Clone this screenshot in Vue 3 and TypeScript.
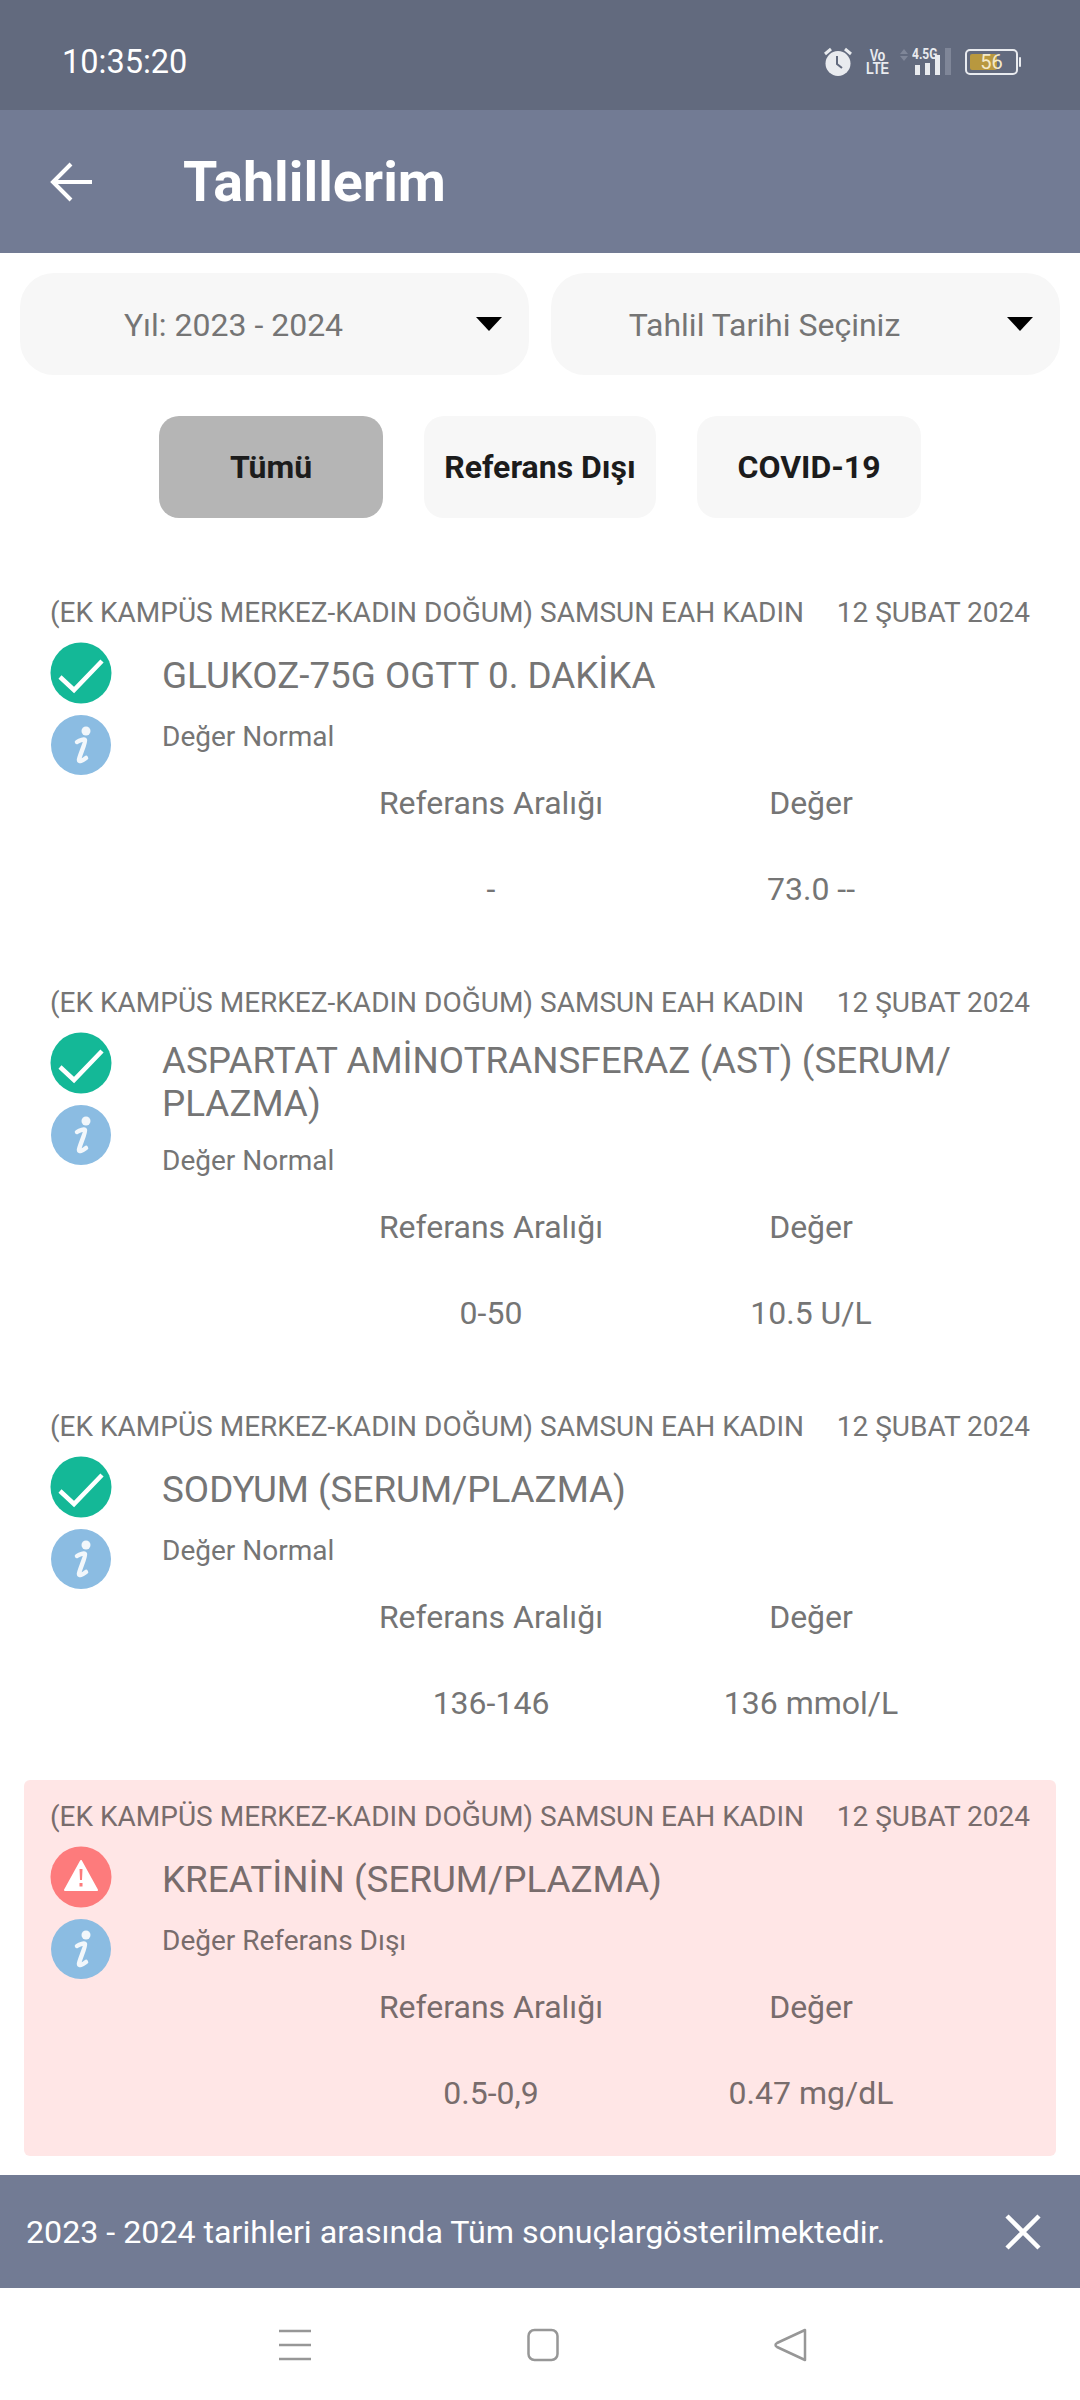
<script setup lang="ts">
interface Row {
  title: string[];
  status: string;
  range: string;
  value: string;
  bad?: boolean;
}
const rows: Row[] = [
  { title: ['GLUKOZ-75G OGTT 0. DAKİKA'], status: 'Değer Normal', range: '-', value: '73.0 --' },
  { title: ['ASPARTAT AMİNOTRANSFERAZ (AST) (SERUM/', 'PLAZMA)'], status: 'Değer Normal', range: '0-50', value: '10.5 U/L' },
  { title: ['SODYUM (SERUM/PLAZMA)'], status: 'Değer Normal', range: '136-146', value: '136 mmol/L' },
  { title: ['KREATİNİN (SERUM/PLAZMA)'], status: 'Değer Referans Dışı', range: '0.5-0,9', value: '0.47 mg/dL', bad: true },
];
const filters = ['Tümü', 'Referans Dışı', 'COVID-19'];
</script>

<template>
  <div class="screen">
    <div class="status">
      <span class="clock">10:35:20</span>
      <div class="sys">
        <svg width="30" height="30" viewBox="0 0 30 30">
          <circle cx="15" cy="16.500" r="12.500" fill="#e9ebef" />
          <path d="M14 9v8l5 4" stroke="#626a7e" stroke-width="2" fill="none" />
          <path d="M2 7l6-5M28 7l-6-5" stroke="#e9ebef" stroke-width="3" />
        </svg>
        <div class="volte"><span>Vo</span><span>LTE</span></div>
        <div class="signal">
          <span class="g">4.5G</span>
          <svg width="52" height="27" viewBox="0 0 52 27">
            <path d="M0 6l4-5 4 5zM0 8l4 5 4-5z" fill="#7f8698" />
            <rect x="15" y="17" width="5" height="10" fill="#e9ebef" />
            <rect x="25" y="15" width="5" height="12" fill="#e9ebef" />
            <rect x="35" y="7" width="5" height="20" fill="#e9ebef" />
            <rect x="45" y="0" width="6" height="27" fill="#7f8698" />
          </svg>
        </div>
        <div class="battery">
          <div class="cell"><i class="fill"></i><span>56</span></div>
          <b class="nub"></b>
        </div>
      </div>
    </div>

    <header class="bar">
      <svg class="back" width="44" height="44" viewBox="0 0 44 44">
        <path d="M42 22H3M21 4L3 22l18 18" stroke="#fff" stroke-width="4" fill="none" />
      </svg>
      <h1>Tahlillerim</h1>
    </header>

    <div class="selects">
      <div class="select"><span>Yıl: 2023 - 2024</span><i class="caret"></i></div>
      <div class="select"><span>Tahlil Tarihi Seçiniz</span><i class="caret"></i></div>
    </div>

    <div class="filters">
      <button v-for="(f, i) in filters" :key="f" class="filter" :class="{ active: i === 0 }">{{ f }}</button>
    </div>

    <div class="list">
      <article v-for="r in rows" :key="r.title[0]" class="item" :class="{ bad: r.bad }">
        <div class="meta">
          <span>(EK KAMPÜS MERKEZ-KADIN DOĞUM) SAMSUN EAH KADIN</span>
          <span>12 ŞUBAT 2024</span>
        </div>
        <div class="main">
          <div class="icons">
            <svg v-if="!r.bad" width="62" height="62" viewBox="0 0 62 62">
              <circle cx="31" cy="31" r="30.500" fill="#14b897" />
              <path d="M10 35l14 13 28-29" stroke="#fff" stroke-width="4.500" fill="none" />
            </svg>
            <svg v-else width="62" height="62" viewBox="0 0 62 62">
              <circle cx="31" cy="31" r="30.500" fill="#fd7b7c" />
              <path d="M31 15L47 44H15z" fill="#fff" stroke="#fff" stroke-width="2" stroke-linejoin="round" />
              <path d="M29.500 23h3l-.5 11h-2zM29.500 37h3v3.500h-3z" fill="#fd7b7c" />
            </svg>
            <svg width="62" height="60" viewBox="0 0 62 60">
              <circle cx="31" cy="30" r="30" fill="#8bbce2" />
              <circle cx="36" cy="16" r="4.500" fill="#f2f7fb" />
              <path d="M27 27c3-2 7-3 8-2 1 2-6 17-6 20 0 2 3 1 7-2" stroke="#f2f7fb" stroke-width="4.500" fill="none" stroke-linecap="round" />
            </svg>
          </div>
          <div class="text">
            <h2 class="title"><span v-for="t in r.title" :key="t">{{ t }}</span></h2>
            <p class="state">{{ r.status }}</p>
            <div class="table">
              <span>Referans Aralığı</span><span>Değer</span>
              <span>{{ r.range }}</span><span>{{ r.value }}</span>
            </div>
          </div>
        </div>
      </article>
    </div>

    <div class="snack">
      <span>2023 - 2024 tarihleri arasında Tüm sonuçlargösterilmektedir.</span>
      <svg width="38" height="38" viewBox="0 0 38 38">
        <path d="M3 3l32 32M35 3L3 35" stroke="#fff" stroke-width="4.500" />
      </svg>
    </div>

    <nav class="nav">
      <svg width="34" height="34" viewBox="0 0 34 34">
        <path d="M1 3h32M1 17h32M1 31h32" stroke="#979797" stroke-width="2.500" />
      </svg>
      <svg width="34" height="34" viewBox="0 0 34 34">
        <rect x="2.500" y="2" width="29" height="30" rx="6" stroke="#979797" stroke-width="2.500" fill="none" />
      </svg>
      <svg width="34" height="34" viewBox="0 0 34 34">
        <path d="M31 2v30L3 19c-2-1-2-3 0-4z" stroke="#979797" stroke-width="2.500" fill="none" stroke-linejoin="round" />
      </svg>
    </nav>
  </div>
</template>

<style>
body { margin: 0; background: #fff; }
</style>

<style scoped>
.screen {
  width: 1080px;
  height: 2400px;
  background: #fff;
  font-family: Roboto, "Liberation Sans", sans-serif;
  overflow: hidden;
  display: flex;
  flex-direction: column;
}
.status {
  height: 110px;
  flex: none;
  background: #626a7e;
  display: flex;
  align-items: center;
  justify-content: space-between;
  padding: 13px 59px 0 62px;
  box-sizing: border-box;
  color: #fff;
}
.clock { font-size: 32.500px; line-height: 1; margin-top: 2px; }
.sys { display: flex; align-items: center; gap: 13px; height: 40px; }
.volte {
  width: 19px;
  margin-left: 2px;
  display: flex;
  flex-direction: column;
  align-items: center;
  color: #e9ebef;
  font-family: "Liberation Sans", sans-serif;
  font-weight: 700;
  font-size: 16px;
  line-height: 13px;
  transform: scaleX(0.8);
}
.signal { position: relative; display: flex; }
.g {
  position: absolute;
  left: 12px;
  top: -3px;
  font-size: 15px;
  font-weight: 700;
  color: #e9ebef;
  transform: scaleX(0.8);
  transform-origin: left;
}
.battery { display: flex; align-items: center; gap: 1px; }
.cell {
  position: relative;
  width: 49px;
  height: 22px;
  border: 2px solid #e9ebef;
  border-radius: 5px;
  display: flex;
  align-items: center;
  justify-content: center;
  color: #f4e9c8;
  font-size: 20px;
}
.fill { position: absolute; left: 3px; top: 3px; bottom: 3px; width: 27px; background: #b8983f; border-radius: 2px; }
.cell span { position: relative; }
.nub { width: 2px; height: 10px; background: #e9ebef; border-radius: 1px; }
.bar {
  height: 143px;
  flex: none;
  background: #727b94;
  display: flex;
  align-items: center;
  padding: 0 0 0 50px;
  box-sizing: border-box;
}
.back { flex: none; margin-right: 89px; }
.bar h1 {
  margin: 3px 0 0;
  font-size: 55.500px;
  font-weight: 700;
  color: #fff;
  line-height: 1;
}
.selects { display: flex; gap: 22px; padding: 20px 20px 0; }
.select {
  position: relative;
  width: 509px;
  flex: none;
  height: 102px;
  background: #f7f7f7;
  border-radius: 34px;
  display: flex;
  align-items: center;
  justify-content: center;
  padding-right: 82px;
  box-sizing: border-box;
  font-size: 32px;
  color: #757575;
}
.select span { position: relative; top: 1px; }
.caret {
  position: absolute;
  right: 27px;
  top: 44px;
  width: 0;
  height: 0;
  border-left: 13px solid transparent;
  border-right: 13px solid transparent;
  border-top: 14px solid #000;
}
.filters { display: flex; justify-content: center; gap: 41px; padding: 41px 0 0; }
.filter {
  width: 224px;
  height: 102px;
  border: 0;
  padding: 0;
  border-radius: 20px;
  background: #f7f7f7;
  font: 700 32px Roboto, sans-serif;
  color: #1c1c1c;
}
.filter:nth-child(2) { width: 232px; }
.filter.active { background: #b5b5b5; }
.list { flex: 1; padding: 58px 24px 0; display: flex; flex-direction: column; gap: 14.500px; }
.item { color: #757575; border-radius: 6px; padding-bottom: 20px; }
.item.bad { background: #ffe6e6; color: #786c6c; }
.meta {
  display: flex;
  justify-content: space-between;
  height: 69px;
  box-sizing: border-box;
  align-items: center;
  padding: 3px 26px 0;
  font-size: 28px;
  white-space: nowrap;
}
.main { display: flex; }
.icons { flex: none; width: 138px; padding-left: 26px; box-sizing: border-box; display: flex; flex-direction: column; gap: 11px; margin-top: -3px; }
.icons svg { display: block; }
.text { min-width: 0; flex: 1; }
.title {
  margin: 4px 0 0;
  font-weight: 400;
  font-size: 36.800px;
  line-height: 43px;
  min-height: 52px;
  display: flex;
  flex-direction: column;
  justify-content: center;
  white-space: nowrap;
}
.state { margin: 18.500px 0 0; font-size: 28px; line-height: 34px; }
.table {
  display: grid;
  grid-template-columns: 320px 320px;
  grid-auto-rows: 86px;
  padding-left: 169px;
  margin-top: 6px;
  font-size: 32px;
  text-align: center;
  align-items: center;
}
.snack {
  flex: none;
  height: 113px;
  background: #727b94;
  color: #fff;
  display: flex;
  align-items: center;
  justify-content: space-between;
  padding: 0 38px 0 26px;
  font-size: 32.200px;
}
.nav {
  flex: none;
  height: 112px;
  display: flex;
  align-items: center;
  justify-content: center;
  gap: 214px;
  padding: 2px 0 0 6px;
  box-sizing: border-box;
}
</style>
